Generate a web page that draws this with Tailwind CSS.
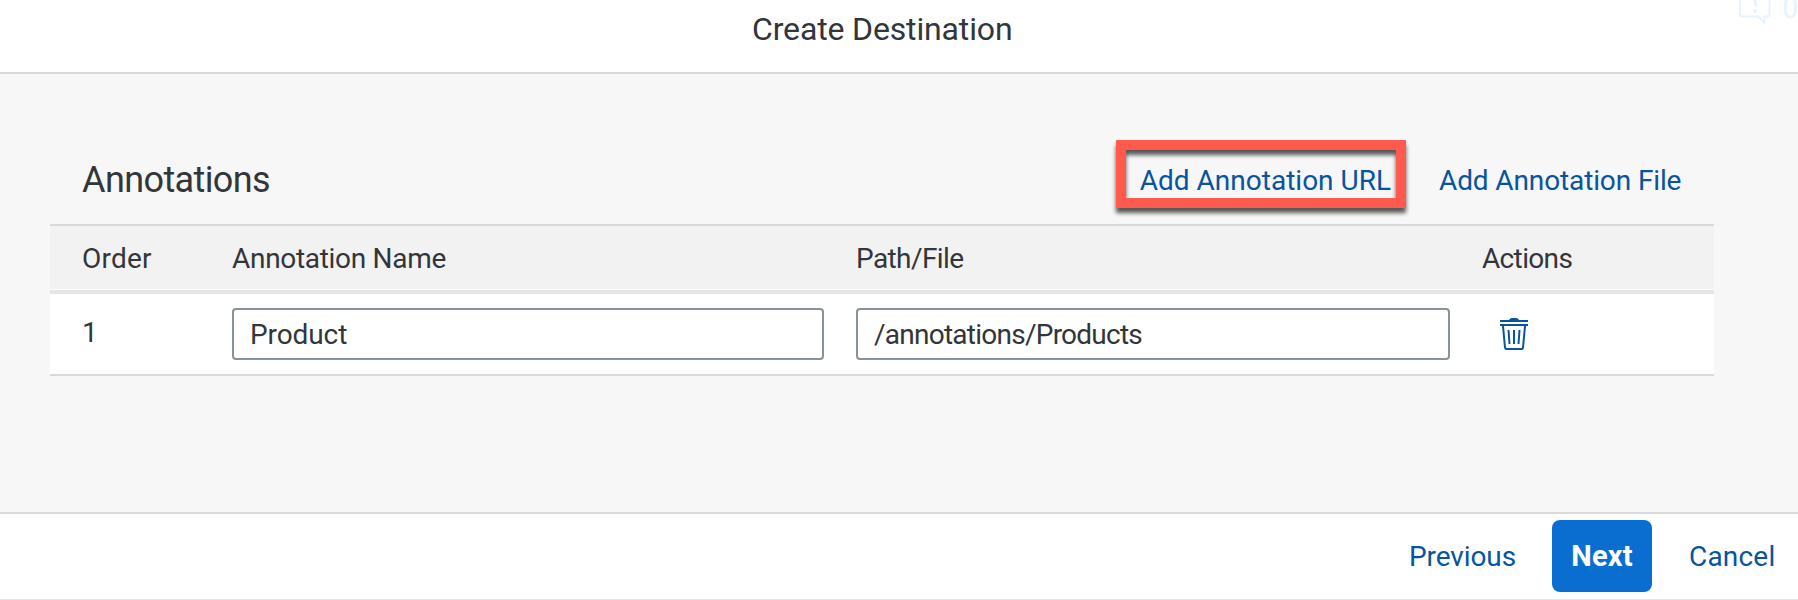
<!DOCTYPE html>
<html lang="en">
<head>
<meta charset="utf-8">
<title>Create Destination</title>
<script src="https://cdn.jsdelivr.net/npm/@tailwindcss/browser@4"></script>
</head>
<body class="flex h-[600px] w-[1798px] flex-col overflow-hidden bg-white font-['Roboto',sans-serif] text-[28px] leading-[36px] text-[#32363a]">
  <header class="relative h-[74px] shrink-0 overflow-hidden border-b-2 border-[#d9d9d9]">
    <h1 class="pl-[752px] text-[32px] leading-[58px] tracking-[-0.15px]">Create Destination</h1>
    <!-- faded message counter in the corner -->
    <div class="absolute top-[-11px] left-[1736px] flex text-[#e8f3ff]">
      <svg class="h-[36px] w-[35px]" viewBox="0 0 35 36" fill="none" stroke="currentColor" stroke-width="2">
        <path d="M4 4H33.500V25Q33.500 27.500 31 27.500H28.500V33.500L22 27.500H6.500Q4 27.500 4 25.500V4Z"/>
        <path d="M17 8H21.200L20.200 18H18.500Z" fill="currentColor" stroke="none"/>
        <circle cx="19" cy="22" r="2" fill="currentColor" stroke="none"/>
      </svg>
      <span class="ml-[11px] pt-px text-[29px]">0</span>
    </div>
  </header>

  <main class="h-[440px] shrink-0 border-b-2 border-[#d9d9d9] bg-[#f7f7f7] pl-[50px]">
    <div class="flex h-[150px] w-[1664px] items-end pb-[25px] pl-8">
      <h2 class="pb-px text-[36px] leading-[36px] tracking-[-0.6px]">Annotations</h2>
      <div class="ml-auto flex gap-[48px] pr-[32px] text-[#0854a0]">
        <a class="relative whitespace-nowrap">Add Annotation URL
          <span class="absolute top-[-23px] left-[-24px] h-[68px] w-[290px] border-[10px] border-[#ff5a4d] drop-shadow-[0_5px_2px_rgba(0,0,0,0.65)]"></span>
        </a>
        <a class="w-[243px] whitespace-nowrap tracking-[-0.12px]">Add Annotation File</a>
      </div>
    </div>
    <div class="w-[1664px] border-y-2 border-[#d9d9d9] bg-white">
      <div class="grid h-[63px] grid-cols-[150px_624px_626px_1fr] items-center bg-[#f2f2f2] pt-0.5 pl-8">
        <div class="tracking-[0.2px]">Order</div>
        <div class="tracking-[-0.3px]">Annotation Name</div>
        <div class="tracking-[-0.6px]">Path/File</div>
        <div class="tracking-[-0.65px]">Actions</div>
      </div>
      <div class="mt-px h-1 bg-[#e5e5e5]"></div>
      <div class="grid h-20 grid-cols-[150px_624px_626px_1fr] items-center pl-8">
        <div class="pb-0.5">1</div>
        <div class="mr-8 flex h-[52px] items-center rounded-[4px] border-2 border-[#89919a] pt-0.5 pl-4 tracking-[-0.1px]">Product</div>
        <div class="mr-8 flex h-[52px] items-center rounded-[4px] border-2 border-[#89919a] pt-0.5 pl-4 tracking-[-0.75px]">/annotations/Products</div>
        <svg class="ml-[18px] h-8 w-7 text-[#0854a0]" viewBox="0 0 28 32" fill="none" stroke="currentColor" stroke-width="2">
          <path d="M0 3H28M0 7H28"/>
          <path d="M9 2Q10 0 12 0H16Q18 0 19 2Z" fill="currentColor" stroke="none"/>
          <path d="M3 8L5 29.500Q5.200 31 6.500 31H21.500Q22.800 31 23 29.500L25 8"/>
          <path d="M8.500 12L9.500 26M14 12V26M19.500 12L18.500 26"/>
        </svg>
      </div>
    </div>
  </main>

  <footer class="flex h-[86px] shrink-0 items-start border-b border-[#e5e5e5] pt-[6px] leading-[74px] text-[#0854a0]">
    <a class="ml-[1409px] w-[143px] tracking-[-0.1px]">Previous</a>
    <button class="h-[72px] w-[100px] rounded-[8px] bg-[#0a6ed1] text-center text-[29px] font-bold leading-[73px] tracking-[0.2px] text-white">Next</button>
    <a class="ml-[37px] tracking-[0.2px]">Cancel</a>
  </footer>
</body>
</html>
